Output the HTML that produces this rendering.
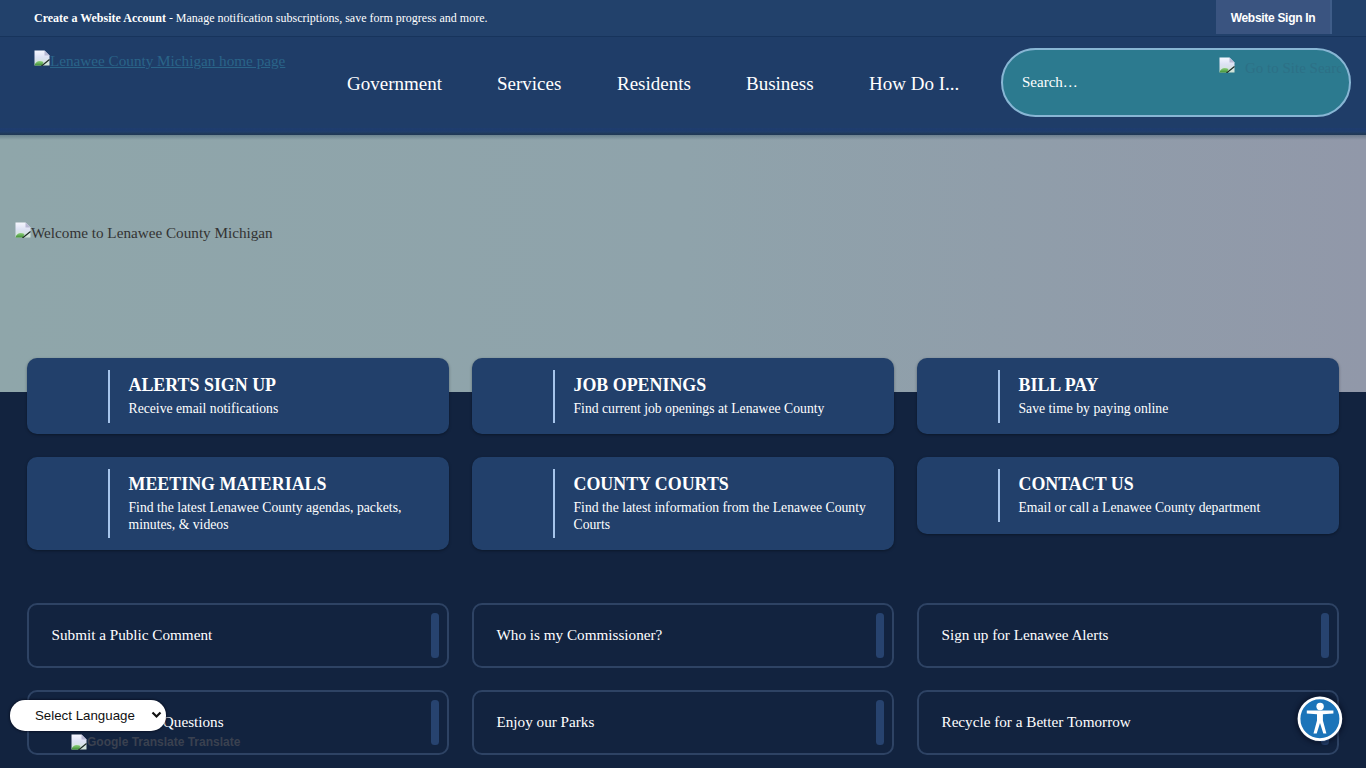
<!DOCTYPE html>
<html>
<head>
<meta charset="utf-8">
<style>
*{box-sizing:border-box;}
html,body{margin:0;padding:0;width:1366px;height:768px;overflow:hidden;background:#12233f;font-family:"Liberation Serif",serif;}
svg.bi{display:inline-block;vertical-align:baseline;}
#topbar{position:absolute;left:0;top:0;width:1366px;height:36px;background:#22416b;}
#topbar .msg{position:absolute;left:34px;top:11px;font-size:12px;color:#fff;white-space:nowrap;line-height:14px;}
#signin{position:absolute;left:1216px;top:0;width:116px;height:34px;background:#3a5480;color:#fff;font-family:"Liberation Sans",sans-serif;font-weight:bold;font-size:12px;letter-spacing:-0.3px;line-height:14px;padding-top:11px;text-align:center;border-right:2px solid #3f5d89;}
#header{position:absolute;left:0;top:36px;width:1366px;height:99px;background:#1f3d68;z-index:2;}
#header:before{content:"";position:absolute;left:0;top:0;width:1366px;height:1px;background:#17345c;}
#header:after{content:"";position:absolute;left:0;top:92px;width:1366px;height:7px;background:linear-gradient(180deg,#1f3d6e 0%,#1e3c6e 30%,#213f6a 55%,#203a5a 80%,#1f3854 100%);}
.logo{position:absolute;left:34px;top:14px;white-space:nowrap;font-size:15.2px;color:#2a6488;text-decoration:underline;line-height:17px;}
.nav{position:absolute;top:37px;font-size:19px;color:#fff;white-space:nowrap;line-height:22px;}
#search{position:absolute;left:1001px;top:12px;width:350px;height:69px;border:2px solid #88b6d4;border-radius:35px;background:#2c7a8f;}
#search .ph{position:absolute;left:19px;top:24px;color:#fff;font-size:15px;line-height:17px;}
#search .si{position:absolute;left:216px;top:7px;white-space:nowrap;font-size:15px;color:#2d7086;line-height:17px;width:122px;overflow:hidden;}
#hero{position:absolute;left:0;top:135px;width:1366px;height:257px;background:linear-gradient(90deg,#8fa6aa 0%,#8fa3ab 50%,#9198a9 100%);}
#hero:before{content:"";position:absolute;left:0;top:0;width:1366px;height:5px;background:linear-gradient(180deg,rgba(40,70,90,.35),rgba(40,70,90,0));}
.welcome{position:absolute;left:15px;top:87px;font-size:15.2px;color:#333;white-space:nowrap;line-height:17px;}
.card{position:absolute;width:422px;background:#22406b;border-radius:10px;box-shadow:0 1px 3px rgba(0,0,0,.35);}
.card .bar{position:absolute;left:81px;top:12px;width:2px;background:#a6c4ea;}
.card .t{position:absolute;left:101.5px;top:17px;font-size:17.9px;font-weight:bold;color:#fff;white-space:nowrap;line-height:20px;}
.card .s{position:absolute;left:101.5px;top:42px;width:300px;font-size:13.7px;color:#fff;line-height:17px;}
.lbox{position:absolute;width:422px;height:65px;border:2px solid #2e4364;border-radius:10px;background:#12233f;}
.lbox .tx{position:absolute;left:22.5px;top:21px;font-size:15.2px;color:#fff;white-space:nowrap;line-height:17px;}
.lbox .pill{position:absolute;left:402px;top:8px;width:8px;height:45px;border-radius:3.5px;background:#27436f;}
#lang{position:absolute;left:10px;top:700px;width:156px;height:31px;border-radius:15px;background:#fff;box-shadow:0 0 2px 1px rgba(5,10,25,.55);font-family:"Liberation Sans",sans-serif;font-size:13.3px;color:#111;}
#lang .lt{position:absolute;left:25px;top:8px;line-height:16px;}
#lang svg{position:absolute;left:141px;top:11px;}
#gticon{position:absolute;left:71px;top:734px;width:16px;height:16px;}
#gticon svg{display:block;}
#gt{position:absolute;left:87px;top:735px;font-family:"Liberation Sans",sans-serif;font-weight:bold;font-size:12px;color:#3a4150;white-space:nowrap;line-height:15px;}
#acc{position:absolute;left:1297px;top:696px;width:46px;height:46px;border-radius:50%;box-shadow:0 0 5px 1px rgba(5,12,30,.7);}
</style>
</head>
<body>
<svg width="0" height="0" style="position:absolute"><defs><linearGradient id="bg" x1="0" y1="0" x2="0" y2="1"><stop offset="0" stop-color="#f6f7ff"/><stop offset="0.45" stop-color="#dde2f4"/><stop offset="1" stop-color="#cfe3d4"/></linearGradient><linearGradient id="gg" x1="0" y1="0" x2="0" y2="1"><stop offset="0" stop-color="#8ccf7a"/><stop offset="1" stop-color="#3f8f35"/></linearGradient></defs></svg>
<div id="topbar"><div class="msg"><b>Create a Website Account</b> - Manage notification subscriptions, save form progress and more.</div>
<div id="signin">Website Sign In</div></div>
<div id="header">
  <div class="logo"><svg class="bi" width="16" height="16" viewBox="0 0 16 16"><path d="M0.5 0.5H10.5L15.5 5.5V15.5H0.5Z" fill="url(#bg)"/><path d="M10.5 0.5V5.5H15.5Z" fill="#b9bad6"/><path d="M0.5 15.5C1.5 11.5 5 10 9.5 12L8 15.5Z" fill="url(#gg)"/><path d="M7.5 16L15.5 9.5" stroke="#1b2b22" stroke-width="1.2"/></svg>Lenawee County Michigan home page</div>
  <div class="nav" style="left:347px">Government</div>
  <div class="nav" style="left:497px">Services</div>
  <div class="nav" style="left:617px">Residents</div>
  <div class="nav" style="left:746px">Business</div>
  <div class="nav" style="left:869px">How Do I...</div>
  <div id="search"><div class="ph">Search…</div><div class="si"><svg class="bi" width="16" height="16" viewBox="0 0 16 16"><path d="M0.5 0.5H10.5L15.5 5.5V15.5H0.5Z" fill="url(#bg)"/><path d="M10.5 0.5V5.5H15.5Z" fill="#b9bad6"/><path d="M0.5 15.5C1.5 11.5 5 10 9.5 12L8 15.5Z" fill="url(#gg)"/><path d="M7.5 16L15.5 9.5" stroke="#1b2b22" stroke-width="1.2"/></svg><span style="margin-left:10px">Go to Site Search</span></div></div>
</div>
<div id="hero"><div class="welcome"><svg class="bi" width="16" height="16" viewBox="0 0 16 16"><path d="M0.5 0.5H10.5L15.5 5.5V15.5H0.5Z" fill="url(#bg)"/><path d="M10.5 0.5V5.5H15.5Z" fill="#b9bad6"/><path d="M0.5 15.5C1.5 11.5 5 10 9.5 12L8 15.5Z" fill="url(#gg)"/><path d="M7.5 16L15.5 9.5" stroke="#1b2b22" stroke-width="1.2"/></svg>Welcome to Lenawee County Michigan</div></div>

<div class="card" style="left:27px;top:358px;height:76px"><div class="bar" style="height:53px"></div><div class="t">ALERTS SIGN UP</div><div class="s">Receive email notifications</div></div>
<div class="card" style="left:472px;top:358px;height:76px"><div class="bar" style="height:53px"></div><div class="t">JOB OPENINGS</div><div class="s">Find current job openings at Lenawee County</div></div>
<div class="card" style="left:917px;top:358px;height:76px"><div class="bar" style="height:53px"></div><div class="t">BILL PAY</div><div class="s">Save time by paying online</div></div>

<div class="card" style="left:27px;top:457px;height:93px"><div class="bar" style="height:69px"></div><div class="t">MEETING MATERIALS</div><div class="s">Find the latest Lenawee County agendas, packets, minutes, &amp; videos</div></div>
<div class="card" style="left:472px;top:457px;height:93px"><div class="bar" style="height:69px"></div><div class="t">COUNTY COURTS</div><div class="s">Find the latest information from the Lenawee County Courts</div></div>
<div class="card" style="left:917px;top:457px;height:77px"><div class="bar" style="height:53px"></div><div class="t">CONTACT US</div><div class="s">Email or call a Lenawee County department</div></div>

<div class="lbox" style="left:27px;top:603px"><div class="tx">Submit a Public Comment</div><div class="pill"></div></div>
<div class="lbox" style="left:472px;top:603px"><div class="tx">Who is my Commissioner?</div><div class="pill"></div></div>
<div class="lbox" style="left:917px;top:603px"><div class="tx">Sign up for Lenawee Alerts</div><div class="pill"></div></div>
<div class="lbox" style="left:27px;top:690px"><div class="tx">Frequently Asked Questions</div><div class="pill"></div></div>
<div class="lbox" style="left:472px;top:690px"><div class="tx">Enjoy our Parks</div><div class="pill"></div></div>
<div class="lbox" style="left:917px;top:690px"><div class="tx">Recycle for a Better Tomorrow</div><div class="pill"></div></div>

<div id="lang"><span class="lt">Select Language</span><svg width="11" height="8" viewBox="0 0 11 8"><path d="M1.5 1.5L5.5 5.5L9.5 1.5" fill="none" stroke="#111" stroke-width="2.2"/></svg></div>
<div id="gticon"><svg class="bi" width="16" height="16" viewBox="0 0 16 16"><path d="M0.5 0.5H10.5L15.5 5.5V15.5H0.5Z" fill="url(#bg)"/><path d="M10.5 0.5V5.5H15.5Z" fill="#b9bad6"/><path d="M0.5 15.5C1.5 11.5 5 10 9.5 12L8 15.5Z" fill="url(#gg)"/><path d="M7.5 16L15.5 9.5" stroke="#1b2b22" stroke-width="1.2"/></svg></div><div id="gt">Google Translate Translate</div>
<div id="acc"><svg width="46" height="46" viewBox="0 0 46 46"><circle cx="22.9" cy="22.7" r="20.9" fill="#1b74b9" stroke="#fff" stroke-width="2.8"/><circle cx="23.1" cy="10.5" r="3.7" fill="#fff"/><path d="M9.8 14.6L36.4 14.6L36.4 17.4L25.9 18.3L25.9 24.5L29.4 37.4L26.3 37.4L23 27L19.7 37.4L16.5 37.4L20 24.5L20 18.3L9.8 17.4Z" fill="#fff"/></svg></div>
</body>
</html>
